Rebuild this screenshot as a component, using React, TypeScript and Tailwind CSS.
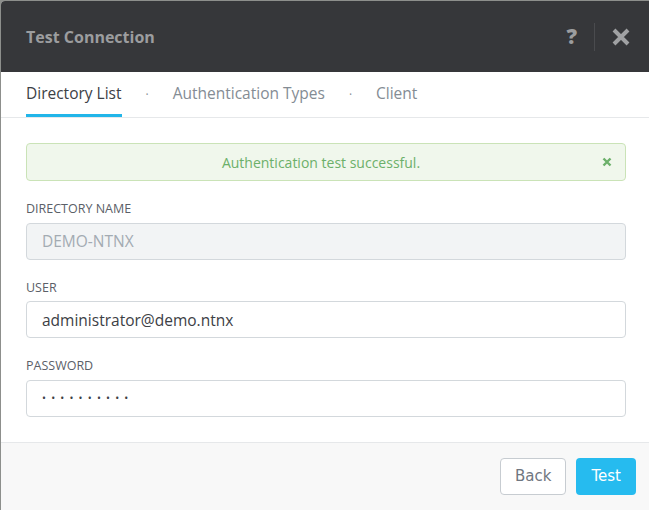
import { useState } from "react";

const TABS = ["Directory List", "Authentication Types", "Client"];

function Field({
  label,
  value,
  disabled = false,
  secret = false,
}: {
  label: string;
  value: string;
  disabled?: boolean;
  secret?: boolean;
}) {
  return (
    <div className="flex flex-col">
      <label className="text-[12.5px] uppercase text-[#5b6068] leading-none mb-[7px]">{label}</label>
      <input
        type="text"
        defaultValue={value}
        disabled={disabled}
        className={`h-[37px] rounded-[4px] border border-[#d3d8dc] px-[15px] outline-none ${
          disabled ? "bg-[#f2f4f5] text-[#a3abb2]" : "bg-white text-[#3c4045]"
        } ${secret ? "text-[10.5px] tracking-[5.2px]" : "text-[15.5px]"}`}
      />
    </div>
  );
}

export default function App() {
  const [active, setActive] = useState(0);
  const [showAlert, setShowAlert] = useState(true);

  return (
    <div className="w-[649px] h-[510px] bg-[#8d8f8c] pt-px pl-px overflow-hidden" style={{ fontFamily: "'Open Sans', sans-serif" }}>
      <div className="flex flex-col h-full w-[650px] bg-white rounded-tl-[4px] overflow-hidden">
        {/* Header */}
        <div className="h-[71px] shrink-0 bg-[#36373a] flex items-center pl-[25px] pr-[21px]">
          <h1 className="text-[16px] font-bold text-[#9c9d9f] flex-1">Test Connection</h1>
          <button className="text-[21px] font-extrabold text-[#9c9d9f] leading-none">?</button>
          <div className="w-px h-[28px] bg-[#4a4b4e] mx-[17px]" />
          <button className="text-[#a0a1a3]">
            <svg width="18" height="18" viewBox="0 0 18 18">
              <path d="M2 2 L16 16 M16 2 L2 16" stroke="currentColor" strokeWidth="4" strokeLinecap="butt" />
            </svg>
          </button>
        </div>

        {/* Tabs */}
        <div className="h-[46px] shrink-0 flex items-stretch pl-[25px] border-b border-[#e6e8ea]">
          {TABS.map((t, i) => (
            <div key={t} className="flex items-stretch">
              {i > 0 && <span className="self-center px-[24px] text-[12px] text-[#8a9096]">·</span>}
              <button
                onClick={() => setActive(i)}
                className={`text-[15.5px] border-b-[3px] pt-[1px] ${
                  i === active ? "border-[#22b5e9] text-[#3c4045]" : "border-transparent text-[#848c94]"
                }`}
              >
                {t}
              </button>
            </div>
          ))}
        </div>

        {/* Body */}
        <div className="flex-1 px-[25px] pt-[25px] flex flex-col">
          {showAlert && (
            <div className="h-[38px] rounded-[4px] border border-[#cae3b7] bg-[#f0f7ec] flex items-center pr-[10px] relative">
              <span className="flex-1 text-center text-[14px] text-[#6cb06a]">Authentication test successful.</span>
              <button onClick={() => setShowAlert(false)} className="absolute right-[13px] text-[#6cb06a]">
                <svg width="10" height="10" viewBox="0 0 10 10">
                  <path d="M1.5 1.5 L8.5 8.5 M8.5 1.5 L1.5 8.5" stroke="currentColor" strokeWidth="2.4" />
                </svg>
              </button>
            </div>
          )}
          <div className="flex flex-col gap-[22px] mt-[22px]">
            <Field label="Directory Name" value="DEMO-NTNX" disabled />
            <Field label="User" value="administrator@demo.ntnx" />
            <Field label="Password" value="••••••••••" secret />
          </div>
        </div>

        {/* Footer */}
        <div className="h-[68px] shrink-0 bg-[#f8f8f8] border-t border-[#e6e8ea] flex items-center justify-end gap-[10px] pr-[15px]">
          <button
            className="h-[37px] px-[14px] rounded-[4px] border border-[#c7ccd1] bg-white text-[15px] text-[#6f7680]"
            style={{ fontFamily: "'DejaVu Sans', sans-serif" }}
          >
            Back
          </button>
          <button
            className="h-[37px] px-[15px] rounded-[4px] bg-[#26bbef] text-[15px] text-white"
            style={{ fontFamily: "'DejaVu Sans', sans-serif" }}
          >
            Test
          </button>
        </div>
      </div>
    </div>
  );
}
